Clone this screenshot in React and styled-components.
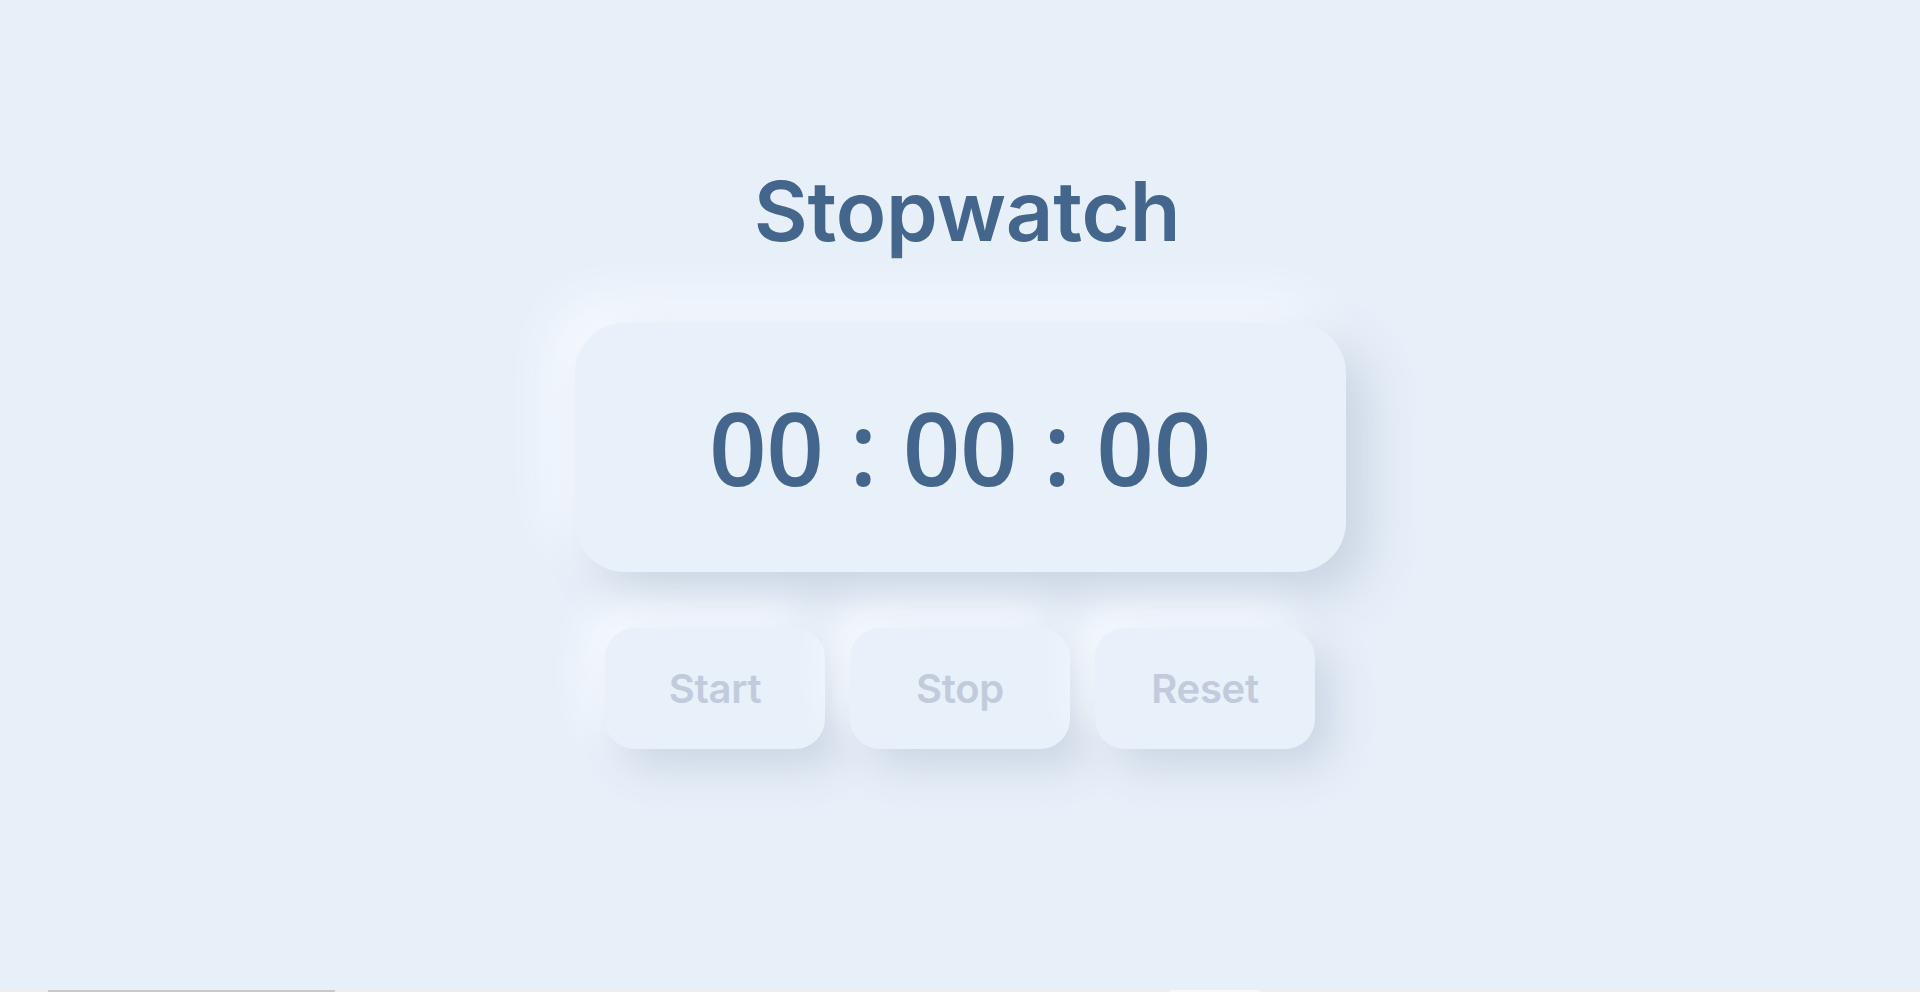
import React from 'react';
import styled, { createGlobalStyle } from 'styled-components';

const GlobalStyle = createGlobalStyle`
  html, body {
    margin: 0;
    padding: 0;
    background: #efefef;
  }
`;

const Page = styled.main`
  height: 990px;
  background: #e7eff9;
  display: flex;
  flex-direction: column;
  align-items: center;
  padding-top: 170px;
  box-sizing: border-box;
`;

const Title = styled.h1`
  margin: 0 0 0 14px;
  font-family: 'Inter', 'Liberation Sans', sans-serif;
  font-weight: 600;
  font-size: 83px;
  line-height: 1;
  letter-spacing: -0.2px;
  color: #44658c;
`;

const Display = styled.div`
  margin-top: 70px;
  width: 771px;
  height: 249px;
  border-radius: 50px;
  background: #e8f0fa;
  box-shadow: 22px 22px 50px #c9d4e2, -22px -22px 50px #f7fbff;
  display: flex;
  align-items: center;
  justify-content: center;
`;

const Time = styled.span`
  font-family: 'Open Sans', 'Liberation Sans', sans-serif;
  font-size: 101px;
  font-weight: 600;
  color: #44658c;
  line-height: 1;
  white-space: pre;
  letter-spacing: -0.4px;
`;

const Controls = styled.div`
  margin-top: 56px;
  display: flex;
  gap: 25px;
`;

const Button = styled.button`
  width: 220px;
  height: 121px;
  border: none;
  border-radius: 30px;
  background: #e8f0fa;
  box-shadow: 18px 18px 40px #cbd5e3, -18px -18px 40px #f7fbff;
  font-family: 'Inter', 'Liberation Sans', sans-serif;
  font-weight: 600;
  font-size: 40px;
  letter-spacing: -0.3px;
  color: #c1cbdb;
  cursor: pointer;
`;

const Below = styled.section`
  background: #efefef;
  display: flex;
  align-items: flex-start;
  padding: 0 0 20px 48px;
  height: 60px;
`;

const Field = styled.input`
  width: 287px;
  height: 28px;
  box-sizing: border-box;
  border: 2px solid #c8c8c8;
  background: #ffffff;
`;

const Box = styled.div`
  margin-left: 835px;
  width: 90px;
  height: 28px;
  background: #f8f8f8;
`;

export default function App() {
  return (
    <>
      <GlobalStyle />
      <Page>
        <Title>Stopwatch</Title>
        <Display>
          <Time>00 : 00 : 00</Time>
        </Display>
        <Controls>
          <Button>Start</Button>
          <Button>Stop</Button>
          <Button>Reset</Button>
        </Controls>
      </Page>
      <Below>
        <Field />
        <Box />
      </Below>
    </>
  );
}
